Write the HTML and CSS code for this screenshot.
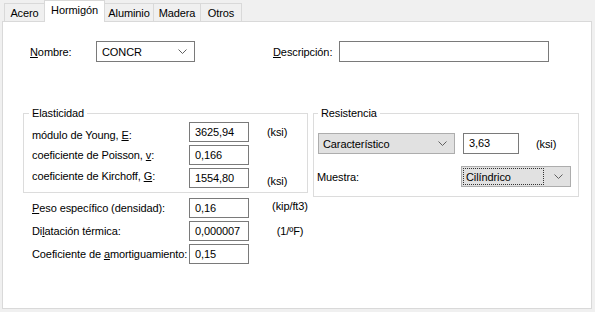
FILE: index.html
```html
<!DOCTYPE html>
<html lang="es">
<head>
    <meta charset="UTF-8">
    <title>Materiales - Hormigón</title>
    <link rel="stylesheet" href="styles.css">
</head>
<body>
    <div class="tabs">
        <div class="tab tab-acero">Acero</div>
        <div class="tab tab-hormigon active">Hormigón</div>
        <div class="tab tab-aluminio">Aluminio</div>
        <div class="tab tab-madera">Madera</div>
        <div class="tab tab-otros">Otros</div>
    </div>

    <div class="panel">
        <div class="top-row">
            <label class="lbl-nombre"><u>N</u>ombre:</label>
            <div class="combo combo-nombre">
                <span>CONCR</span>
                <svg class="chevron" width="9" height="5" viewBox="0 0 9 5"><path d="M0.5 0.5 L4.5 4.5 L8.5 0.5" /></svg>
            </div>
            <label class="lbl-desc"><u>D</u>escripción:</label>
            <div class="field field-desc"></div>
        </div>

        <div class="groups">
            <fieldset class="group group-elast">
                <legend>Elasticidad</legend>
                <div class="rows">
                    <div class="row">
                        <span class="label drop">módulo de Young, <u>E</u>:</span>
                        <span class="field field-num">3625,94</span>
                        <span class="unit-ksi">(ksi)</span>
                    </div>
                    <div class="row">
                        <span class="label">coeficiente de Poisson, <u>v</u>:</span>
                        <span class="field field-num">0,166</span>
                    </div>
                    <div class="row">
                        <span class="label lift">coeficiente de Kirchoff, <u>G</u>:</span>
                        <span class="field field-num">1554,80</span>
                        <span class="unit-ksi drop">(ksi)</span>
                    </div>
                </div>
            </fieldset>

            <fieldset class="group group-resist">
                <legend>Resistencia</legend>
                <div class="resist-row">
                    <div class="combo combo-gray combo-tipo">
                        <span>Característico</span>
                        <svg class="chevron" width="9" height="5" viewBox="0 0 9 5"><path d="M0.5 0.5 L4.5 4.5 L8.5 0.5" /></svg>
                    </div>
                    <span class="field field-fc">3,63</span>
                    <span class="unit-fc">(ksi)</span>
                </div>
                <div class="resist-row muestra-row">
                    <span class="lbl-muestra">Muestra:</span>
                    <div class="combo combo-gray combo-muestra">
                        <span class="focus">Cilíndrico</span>
                        <svg class="chevron" width="9" height="5" viewBox="0 0 9 5"><path d="M0.5 0.5 L4.5 4.5 L8.5 0.5" /></svg>
                    </div>
                </div>
            </fieldset>
        </div>

        <div class="props">
            <div class="row">
                <span class="label"><u>P</u>eso específico (densidad):</span>
                <span class="field field-num">0,16</span>
                <span class="unit lift">(kip/ft3)</span>
            </div>
            <div class="row">
                <span class="label">Di<u>l</u>atación térmica:</span>
                <span class="field field-num">0,000007</span>
                <span class="unit">(1/ºF)</span>
            </div>
            <div class="row">
                <span class="label">Coeficiente de <u>a</u>mortiguamiento:</span>
                <span class="field field-num">0,15</span>
            </div>
        </div>
    </div>
</body>
</html>
```

FILE: styles.css
```css
:root {
    --bg-color: #f0f0f0;
    --tab-border: #d9d9d9;
    --group-border: #dcdcdc;
    --field-border: #7a7a7a;
    --combo-bg: #e1e1e1;
    --combo-border: #adadad;
    --text-color: #000;
}

* {
    box-sizing: border-box;
}

body {
    margin: 0;
    width: 595px;
    height: 312px;
    overflow: hidden;
    background-color: var(--bg-color);
    color: var(--text-color);
    font-family: "Liberation Sans", Arial, sans-serif;
    font-size: 11px;
    letter-spacing: -0.1px;
}

u {
    text-decoration: underline;
    text-underline-offset: 1px;
}

/* Pestañas */
.tabs {
    display: flex;
    align-items: flex-end;
    height: 21px;
    padding-left: 4px;
}

.tab {
    height: 18px;
    padding-top: 3px;
    text-align: center;
    background-color: var(--bg-color);
    border-top: 1px solid var(--tab-border);
    border-left: 1px solid var(--tab-border);
}

.tab:last-child {
    border-right: 1px solid var(--tab-border);
}

.tab.active {
    position: relative;
    z-index: 1;
    height: 22px;
    margin: 0 -1px -1px 0;
    padding-top: 3px;
    background-color: #fff;
    border-right: 1px solid var(--tab-border);
}

.tab-acero { width: 40px; }
.tab-hormigon { width: 61px; }
.tab-aluminio { width: 49px; }
.tab-madera { width: 47px; }
.tab-otros { width: 42px; }

/* Panel */
.panel {
    margin-left: 2px;
    width: 590px;
    height: 288px;
    background-color: #fff;
    border: 1px solid var(--tab-border);
}

.top-row {
    display: flex;
    align-items: center;
    height: 21px;
    margin-top: 19px;
    padding-left: 27px;
}

.lbl-nombre {
    width: 66px;
}

.lbl-desc {
    width: 66px;
    margin-left: 78px;
}

/* Campos */
.field {
    display: block;
    height: 20px;
    padding: 0 5px;
    line-height: 18px;
    background-color: #fff;
    border: 1px solid var(--field-border);
    white-space: nowrap;
}

.field-desc {
    width: 210px;
    height: 21px;
}

.field-num {
    width: 60px;
}

.field-fc {
    width: 56px;
    height: 21px;
    margin-left: 8px;
    line-height: 19px;
}

.combo {
    display: flex;
    align-items: center;
    justify-content: space-between;
    height: 21px;
    padding: 0 7px 0 5px;
    background-color: #fff;
    border: 1px solid var(--field-border);
}

.combo-gray {
    background-color: var(--combo-bg);
    border-color: var(--combo-border);
}

.chevron {
    flex-shrink: 0;
}

.chevron path {
    fill: none;
    stroke: #606060;
    stroke-width: 1;
}

.combo-nombre {
    width: 99px;
}

.combo-tipo {
    width: 137px;
    padding-left: 4px;
}

.combo-muestra {
    width: 110px;
    padding: 1px 7px 1px 1px;
}

.focus {
    flex: 1;
    height: 100%;
    margin-right: 10px;
    padding-left: 2px;
    line-height: 17px;
    border: 1px dotted #333;
}

/* Grupos */
.groups {
    display: flex;
    align-items: flex-start;
    margin-top: 44px;
}

.group {
    margin: 0;
    min-width: 0;
    border: 1px solid var(--group-border);
}

.group legend {
    padding: 0 3px;
    line-height: 14px;
}

.group-elast {
    width: 285px;
    height: 87px;
    margin-left: 20px;
    padding: 0 8px 0 8px;
}

.group-elast legend {
    margin-left: -3px;
}

.group-resist {
    width: 266px;
    height: 91px;
    margin-left: 5px;
    padding: 0 4px;
}

.rows {
    display: grid;
    row-gap: 3px;
    margin-top: 2px;
}

.row {
    display: flex;
    align-items: center;
    height: 20px;
}

.label {
    width: 157px;
    white-space: nowrap;
}

.unit-ksi {
    margin-left: 18px;
}

.drop {
    position: relative;
    top: 3px;
}

.lift {
    position: relative;
    top: -2px;
}

.resist-row {
    display: flex;
    align-items: center;
    margin-top: 13px;
}

.unit-fc {
    margin-left: 17px;
}

.muestra-row {
    margin-top: 12px;
}

.lbl-muestra {
    width: 144px;
    margin-left: -1px;
}

/* Propiedades */
.props {
    display: grid;
    row-gap: 3px;
    margin-top: 1px;
    padding-left: 29px;
}

.unit {
    width: 44px;
    margin-left: 19px;
    text-align: center;
}
```
